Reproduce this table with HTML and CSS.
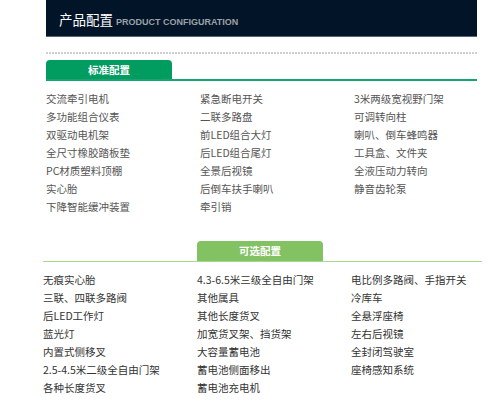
FILE: index.html
```html
<!DOCTYPE html>
<html lang="zh-CN">
<head>
<meta charset="utf-8">
<title>产品配置</title>
<link rel="stylesheet" href="styles.css">
</head>
<body>
<div class="header">
  <span class="title-cn">产品配置</span>
  <span class="title-en">PRODUCT CONFIGURATION</span>
</div>
<div class="dash"></div>

<section class="sec sec-std">
  <div class="tabbar std"><div class="tab std-tab">标准配置</div></div>
  <div class="grid std-grid">
    <div>交流牵引电机</div><div>紧急断电开关</div><div>3米两级宽视野门架</div>
    <div>多功能组合仪表</div><div>二联多路盘</div><div>可调转向柱</div>
    <div>双驱动电机架</div><div>前LED组合大灯</div><div>喇叭、倒车蜂鸣器</div>
    <div>全尺寸橡胶踏板垫</div><div>后LED组合尾灯</div><div>工具盒、文件夹</div>
    <div>PC材质塑料顶棚</div><div>全景后视镜</div><div>全液压动力转向</div>
    <div>实心胎</div><div>后倒车扶手喇叭</div><div>静音齿轮泵</div>
    <div>下降智能缓冲装置</div><div>牵引销</div>
  </div>
</section>

<section class="sec sec-opt">
  <div class="tabbar opt"><div class="tab opt-tab">可选配置</div></div>
  <div class="grid opt-grid">
    <div>无痕实心胎</div><div>4.3-6.5米三级全自由门架</div><div>电比例多路阀、手指开关</div>
    <div>三联、四联多路阀</div><div>其他属具</div><div>冷库车</div>
    <div>后LED工作灯</div><div>其他长度货叉</div><div>全悬浮座椅</div>
    <div>蓝光灯</div><div>加宽货叉架、挡货架</div><div>左右后视镜</div>
    <div>内置式侧移叉</div><div>大容量蓄电池</div><div>全封闭驾驶室</div>
    <div>2.5-4.5米二级全自由门架</div><div>蓄电池侧面移出</div><div>座椅感知系统</div>
    <div>各种长度货叉</div><div>蓄电池充电机</div>
  </div>
</section>
</body>
</html>
```

FILE: styles.css
```css
html, body {
  margin: 0;
  padding: 0;
  background: #ffffff;
  font-family: "Noto Sans CJK SC", "Liberation Sans", sans-serif;
}

.header {
  margin-left: 46px;
  width: 418px;
  height: 25px;
  padding: 11px 0 0 13px;
  background: #021428;
  border-bottom: 1px solid #5b6470;
  display: flex;
  align-items: baseline;
  line-height: 17px;
}

.title-cn {
  color: #ffffff;
  font-size: 13.5px;
}

.title-en {
  margin-left: 3px;
  color: #9ca2a8;
  font-family: "Liberation Sans", sans-serif;
  font-weight: bold;
  font-size: 9px;
}

.dash {
  margin: 15px 0 0 46px;
  width: 431px;
  height: 2px;
  background: repeating-linear-gradient(to right, #cfcfcf 0 2px, transparent 2px 3px);
}

.sec-std {
  margin: 6px 0 0 46px;
  width: 431px;
}

.sec-opt {
  margin: 25px 0 0 43px;
  width: 439px;
}

.tabbar {
  display: flex;
}

.tabbar.std {
  border-bottom: 2px solid #18a46f;
}

.tabbar.opt {
  border-bottom: 1px solid #a8d78f;
  padding-left: 154px;
}

.tab {
  width: 126px;
  height: 19px;
  line-height: 19px;
  text-align: center;
  color: #ffffff;
  font-size: 10.5px;
  font-weight: bold;
  border-radius: 4px 4px 0 0;
}

.std-tab {
  background: #009c60;
}

.opt-tab {
  height: 20px;
  line-height: 20px;
  background: #83c262;
}

.grid {
  display: grid;
  grid-template-columns: 154px 154px 1fr;
  font-size: 10.5px;
  line-height: 18px;
  white-space: nowrap;
}

.std-grid {
  margin-top: 9px;
  color: #555555;
}

.opt-grid {
  margin-top: 9px;
  color: #333333;
}
```
